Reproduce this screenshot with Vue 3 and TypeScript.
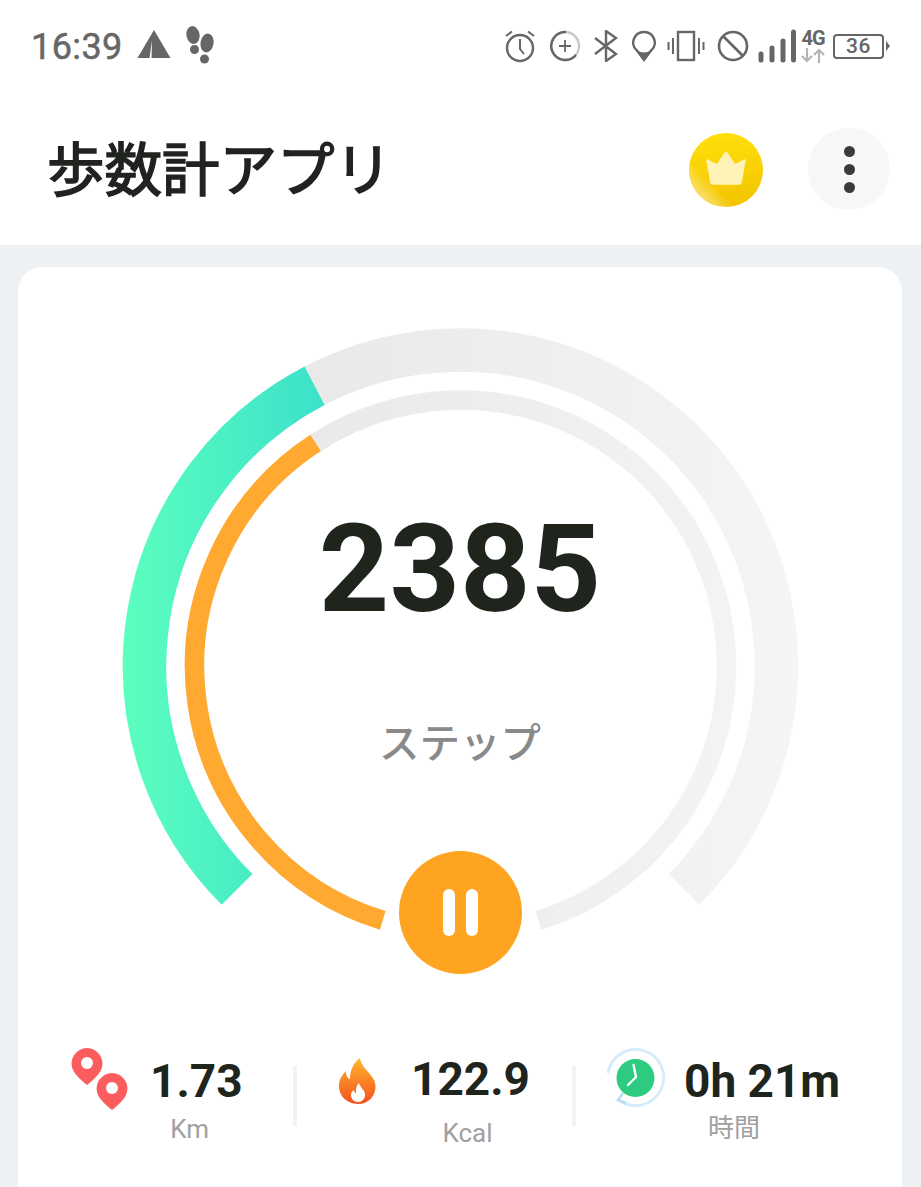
<script setup lang="ts">
const cx = 442.5
const cy = 399

function point(r: number, deg: number): string {
  const a = (deg * Math.PI) / 180
  return `${(cx - r * Math.sin(a)).toFixed(2)} ${(cy + r * Math.cos(a)).toFixed(2)}`
}

function arc(r: number, from: number, to: number): string {
  const large = to - from > 180 ? 1 : 0
  return `M${point(r, from)}A${r} ${r} 0 ${large} 1 ${point(r, to)}`
}

const rings = {
  outerTrack: arc(316, 152.5, 315),
  outerValue: arc(316, 45, 152.5),
  innerTrack: arc(266, 147, 343),
  innerValue: arc(266, 17, 147),
}
</script>

<template>
  <div class="page">
    <div class="status">
      <div class="status-left">
        <span class="clock">16:39</span>
        <svg class="ic-tri" width="34" height="30" viewBox="0 0 34 30">
          <path d="M17 1 0.5 29H12.5L15 11 14.5 29H33.5Z" fill="#666" />
        </svg>
        <svg class="ic-feet" width="32" height="40" viewBox="0 0 32 40" fill="#666">
          <ellipse cx="8" cy="9" rx="6.500" ry="9" transform="rotate(-10 8 9)" />
          <ellipse cx="9.500" cy="23.500" rx="4.500" ry="4.500" />
          <ellipse cx="22" cy="17" rx="6.500" ry="9.500" transform="rotate(10 22 17)" />
          <ellipse cx="19.500" cy="33" rx="4.500" ry="4.500" />
        </svg>
      </div>
      <div class="status-right">
        <svg width="32" height="34" viewBox="0 0 32 34" fill="none" stroke="#666" stroke-width="2.4">
          <circle cx="16" cy="19" r="13" />
          <path d="M16 10V20L20 25M2 7 8 2.5M24 2.5 30 7" stroke-width="2" />
        </svg>
        <svg class="g13" width="32" height="32" viewBox="0 0 32 32" fill="none" stroke-width="2.4">
          <circle cx="16" cy="16" r="14" stroke="#c8c8c8" />
          <path d="M17 2A14 14 0 1 0 27 25" stroke="#666" />
          <path d="M16 10V22M10 16H22" stroke="#666" stroke-width="1.8" />
        </svg>
        <svg class="g13" width="24" height="32" viewBox="0 0 24 32" fill="none" stroke="#666" stroke-width="2.4">
          <path d="M1 8 22 24 12 31V1L22 8 1 24" />
        </svg>
        <svg class="g14" width="24" height="32" viewBox="0 0 24 32">
          <path d="M12 2A10.5 10.5 0 0 0 5 20.5L12 30 19 20.5A10.5 10.5 0 0 0 12 2Z" fill="none" stroke="#666" stroke-width="2.4" />
          <path d="M5 20.500 12 31 19 20.500Q12 24.500 5 20.500Z" fill="#666" />
        </svg>
        <svg class="g11" width="38" height="32" viewBox="0 0 38 32" fill="none" stroke="#666">
          <rect x="11" y="2" width="16" height="28" stroke-width="2.4" />
          <path d="M6 8V24M32 8V24M1.5 12V20M36.5 12V20" stroke-width="2" />
        </svg>
        <svg class="g12" width="32" height="32" viewBox="0 0 32 32" fill="none" stroke="#666" stroke-width="2.6">
          <circle cx="16" cy="16" r="14" />
          <path d="M6 6 26 26" />
        </svg>
        <svg class="g9" width="38" height="34" viewBox="0 0 38 34" stroke="#666" stroke-linecap="round" stroke-width="5">
          <path d="M3 25V31M14 19V31M25 12V31M35.500 3V31" />
        </svg>
        <div class="net g5">
          <span class="net-label">4G</span>
          <svg width="24" height="15" viewBox="0 0 24 15" fill="none" stroke="#b4b4b4" stroke-width="2.200">
            <path d="M6 0V13M1 8 6 13 11 8M18 15V2M13 7 18 2 23 7" />
          </svg>
        </div>
        <div class="battery g8">
          <span class="battery-level">36</span>
        </div>
        <span class="battery-tip"></span>
      </div>
    </div>

    <header class="bar">
      <h1 class="title">歩数計アプリ</h1>
      <div class="bar-actions">
        <svg class="crown" width="74" height="74" viewBox="0 0 74 74">
          <defs>
            <linearGradient id="coin" x1="0.45" y1="0" x2="0.55" y2="1">
              <stop offset="0" stop-color="#ffdf0a" />
              <stop offset="1" stop-color="#f3c400" />
            </linearGradient>
            <linearGradient id="gloss" x1="0.1" y1="0.95" x2="0.34" y2="0.71">
              <stop offset="0" stop-color="#fff" stop-opacity="0.6" />
              <stop offset="1" stop-color="#fff" stop-opacity="0" />
            </linearGradient>
          </defs>
          <circle cx="37" cy="37" r="37" fill="url(#coin)" />
          <circle cx="37" cy="37" r="37" fill="url(#gloss)" />
          <path d="M18 27 28 32 37 19 46 32 56 27 52 50Q52 51 50 51H24Q22 51 22 50Z" fill="#fff3b8" stroke="#fff3b8" stroke-width="1.500" stroke-linejoin="round" />
        </svg>
        <div class="more">
          <span class="dot"></span>
          <span class="dot"></span>
          <span class="dot"></span>
        </div>
      </div>
    </header>

    <main class="main">
      <section class="card">
        <div class="dial">
          <svg class="rings" width="884" height="770" viewBox="0 0 884 770" fill="none">
            <defs>
              <linearGradient id="teal" gradientUnits="userSpaceOnUse" x1="104" y1="0" x2="310" y2="0">
                <stop offset="0" stop-color="#5cffbe" />
                <stop offset="1" stop-color="#3be0ca" />
              </linearGradient>
              <linearGradient id="track" gradientUnits="userSpaceOnUse" x1="290" y1="0" x2="780" y2="0">
                <stop offset="0" stop-color="#e9e9e9" />
                <stop offset="1" stop-color="#f5f5f5" />
              </linearGradient>
            </defs>
            <path :d="rings.outerTrack" stroke="url(#track)" stroke-width="43.500" />
            <path :d="rings.outerValue" stroke="url(#teal)" stroke-width="43.500" />
            <path :d="rings.innerTrack" stroke="url(#track)" stroke-width="19.500" />
            <path :d="rings.innerValue" stroke="#ffa930" stroke-width="19.500" />
          </svg>
          <div class="count">2385</div>
          <div class="unit">ステップ</div>
          <div class="pause">
            <span class="pause-bar"></span>
            <span class="pause-bar"></span>
          </div>
        </div>

        <div class="stats">
          <div class="stat stat-km">
            <svg width="60" height="64" viewBox="0 0 60 64">
              <path d="M17 1A15.500 15.500 0 0 0 3 23C6 29 12 34 17 38 22 34 28 29 31 23A15.500 15.500 0 0 0 17 1Z" fill="#fb5c5e" />
              <circle cx="17" cy="16" r="6" fill="#fff" />
              <path d="M42 26A15.500 15.500 0 0 0 28 48C31 54 37 59 42 63 47 59 53 54 56 48A15.500 15.500 0 0 0 42 26Z" fill="#fb5c5e" />
              <circle cx="42" cy="41" r="6" fill="#fff" />
            </svg>
            <div class="stat-text km-text">
              <span class="value">1.73</span>
              <span class="label">Km</span>
            </div>
          </div>
          <span class="divider"></span>
          <div class="stat stat-kcal">
            <svg width="40" height="48" viewBox="0 0 40 48">
              <defs>
                <linearGradient id="flame" x1="0.5" y1="0" x2="0.5" y2="1">
                  <stop offset="0" stop-color="#ffb62e" />
                  <stop offset="1" stop-color="#f4511e" />
                </linearGradient>
              </defs>
              <path d="M22 1C23 10 32 15 36 23 41 34 33 47 20 47 8 47 0 38 1 27 1.500 22 4 18 8 14 8 18 9 21 12 22 12 14 15 6 22 1Z" fill="url(#flame)" />
              <path d="M21 26C22 31 28 33 27 39 26 43 23 45 20 45 16 45 13 42 13 38 13 36 14 34 16 33 16 35 17 36 18 36 18 32 18 29 21 26Z" fill="#fff" />
            </svg>
            <div class="stat-text kcal-text">
              <span class="value">122.9</span>
              <span class="label">Kcal</span>
            </div>
          </div>
          <span class="divider"></span>
          <div class="stat stat-time">
            <svg width="60" height="60" viewBox="0 0 60 60" fill="none">
              <path d="M2 25A28 28 0 1 1 13 52" stroke="#d4ecfa" stroke-width="2.800" />
              <path d="M17 45 12 52 20 55" stroke="#b9e0f6" stroke-width="2.800" />
              <circle cx="29.500" cy="30" r="19" fill="#2ccb80" />
              <path d="M27.500 17 30 29 22 37" stroke="#fff" stroke-width="2.400" stroke-linecap="round" stroke-linejoin="round" />
            </svg>
            <div class="stat-text time-text">
              <span class="value">0h 21m</span>
              <span class="label">時間</span>
            </div>
          </div>
        </div>
      </section>
    </main>
  </div>
</template>

<style scoped>
.page {
  width: 921px;
  height: 1187px;
  overflow: hidden;
  background: #fff;
  font-family: Roboto, "Noto Sans CJK JP", sans-serif;
  display: flex;
  flex-direction: column;
}
.status {
  height: 92px;
  flex: none;
  display: flex;
  justify-content: space-between;
  align-items: center;
  padding: 0 31px 0 31px;
  box-sizing: border-box;
  color: #666;
}
.status-left {
  display: flex;
  align-items: center;
}
.clock {
  font-size: 36px;
  font-weight: 400;
  letter-spacing: 0.4px;
  color: #666;
  -webkit-text-stroke: 0.5px #666;
  margin-top: 2px;
}
.ic-tri {
  margin: -4px 0 0 14px;
}
.ic-feet {
  margin: 0 0 0 14px;
}
.status-right {
  display: flex;
  align-items: center;
}
.g14 {
  margin-left: 14px;
}
.g13 {
  margin-left: 13px;
}
.g12 {
  margin-left: 12px;
}
.g11 {
  margin-left: 11px;
}
.g9 {
  margin-left: 9px;
}
.g5 {
  margin-left: 5px;
}
.g8 {
  margin-left: 8px;
}
.net {
  width: 24px;
  height: 34px;
  display: flex;
  flex-direction: column;
  align-items: center;
  justify-content: space-between;
}
.net-label {
  font-size: 20px;
  line-height: 18px;
  font-weight: 700;
  color: #666;
  letter-spacing: -1px;
}
.battery {
  width: 51px;
  height: 25px;
  box-sizing: border-box;
  border: 2.4px solid #666;
  border-radius: 4px;
  display: flex;
  align-items: center;
  justify-content: center;
}
.battery-level {
  font-size: 21px;
  font-weight: 500;
  color: #666;
  line-height: 1;
  letter-spacing: 0.5px;
}
.battery-tip {
  width: 0;
  height: 0;
  margin-left: 2px;
  border-left: 4px solid #666;
  border-top: 5px solid transparent;
  border-bottom: 5px solid transparent;
}
.bar {
  height: 153px;
  flex: none;
  display: flex;
  align-items: center;
  justify-content: space-between;
  padding: 0 31px 0 47px;
  box-sizing: border-box;
}
.title {
  margin: -4px 0 0;
  font-family: "Noto Sans CJK JP", sans-serif;
  font-size: 57.500px;
  line-height: 1.2;
  font-weight: 400;
  -webkit-text-stroke: 1.6px #20231f;
  color: #20231f;
}
.bar-actions {
  display: flex;
  align-items: center;
  gap: 45px;
  margin-top: 1px;
}
.crown {
  margin-top: 2px;
}
.more {
  width: 82px;
  height: 82px;
  border-radius: 50%;
  background: #f7f7f7;
  display: flex;
  flex-direction: column;
  align-items: center;
  justify-content: center;
  gap: 7px;
}
.dot {
  width: 11px;
  height: 11px;
  border-radius: 50%;
  background: #3a3c3a;
}
.main {
  flex: 1;
  background: #edf1f4;
  padding: 22px 19px 0 18px;
}
.card {
  height: 100%;
  background: #fff;
  border-radius: 24px 24px 0 0;
  display: flex;
  flex-direction: column;
}
.dial {
  position: relative;
  height: 770px;
  flex: none;
}
.rings {
  display: block;
}
.count {
  position: absolute;
  left: 0;
  right: 0;
  top: 230px;
  text-align: center;
  font-size: 123px;
  line-height: 144px;
  font-weight: 700;
  color: #1f241d;
}
.unit {
  position: absolute;
  left: 0;
  right: 0;
  top: 445px;
  text-align: center;
  font-family: "Noto Sans CJK JP", sans-serif;
  font-size: 40.500px;
  line-height: 58px;
  font-weight: 500;
  color: #8a8a8a;
}
.pause {
  position: absolute;
  left: 381px;
  top: 584px;
  width: 123px;
  height: 123px;
  border-radius: 50%;
  background: #ffa420;
  display: flex;
  align-items: center;
  justify-content: center;
  gap: 11px;
}
.pause-bar {
  width: 12px;
  height: 47px;
  border-radius: 6px;
  background: #fff;
}
.stats {
  display: flex;
  align-items: flex-start;
  padding-left: 52px;
}
.stat {
  display: flex;
  align-items: flex-start;
  flex: none;
}
.stat-km {
  width: 223px;
}
.stat-km svg {
  margin-top: 10px;
}
.km-text {
  margin: 17px 0 0 20px;
}
.stat-kcal {
  width: 275px;
  padding-left: 41px;
  box-sizing: border-box;
}
.stat-kcal svg {
  margin-top: 20px;
}
.kcal-text {
  margin: 15px 0 0 33px;
}
.stat-time {
  padding-left: 30px;
}
.stat-time svg {
  margin-top: 11px;
}
.time-text {
  margin: 17px 0 0 18px;
}
.stat-text {
  display: flex;
  flex-direction: column;
  align-items: center;
}
.value {
  font-size: 46px;
  line-height: 54px;
  font-weight: 700;
  color: #1f241d;
  white-space: nowrap;
}
.label {
  font-size: 26px;
  line-height: 36px;
  margin-top: 3px;
  color: #a0a0a0;
}
.time-text .label {
  margin-right: 56px;
  margin-top: 2px;
}
.km-text .label {
  margin-right: 13px;
}
.kcal-text .label {
  margin-top: 9px;
  margin-right: 6px;
}
.divider {
  width: 4px;
  height: 60px;
  margin-top: 29px;
  background: #f3f3f3;
  flex: none;
}
</style>

<style>
html,
body {
  margin: 0;
  overflow: hidden;
}
</style>
